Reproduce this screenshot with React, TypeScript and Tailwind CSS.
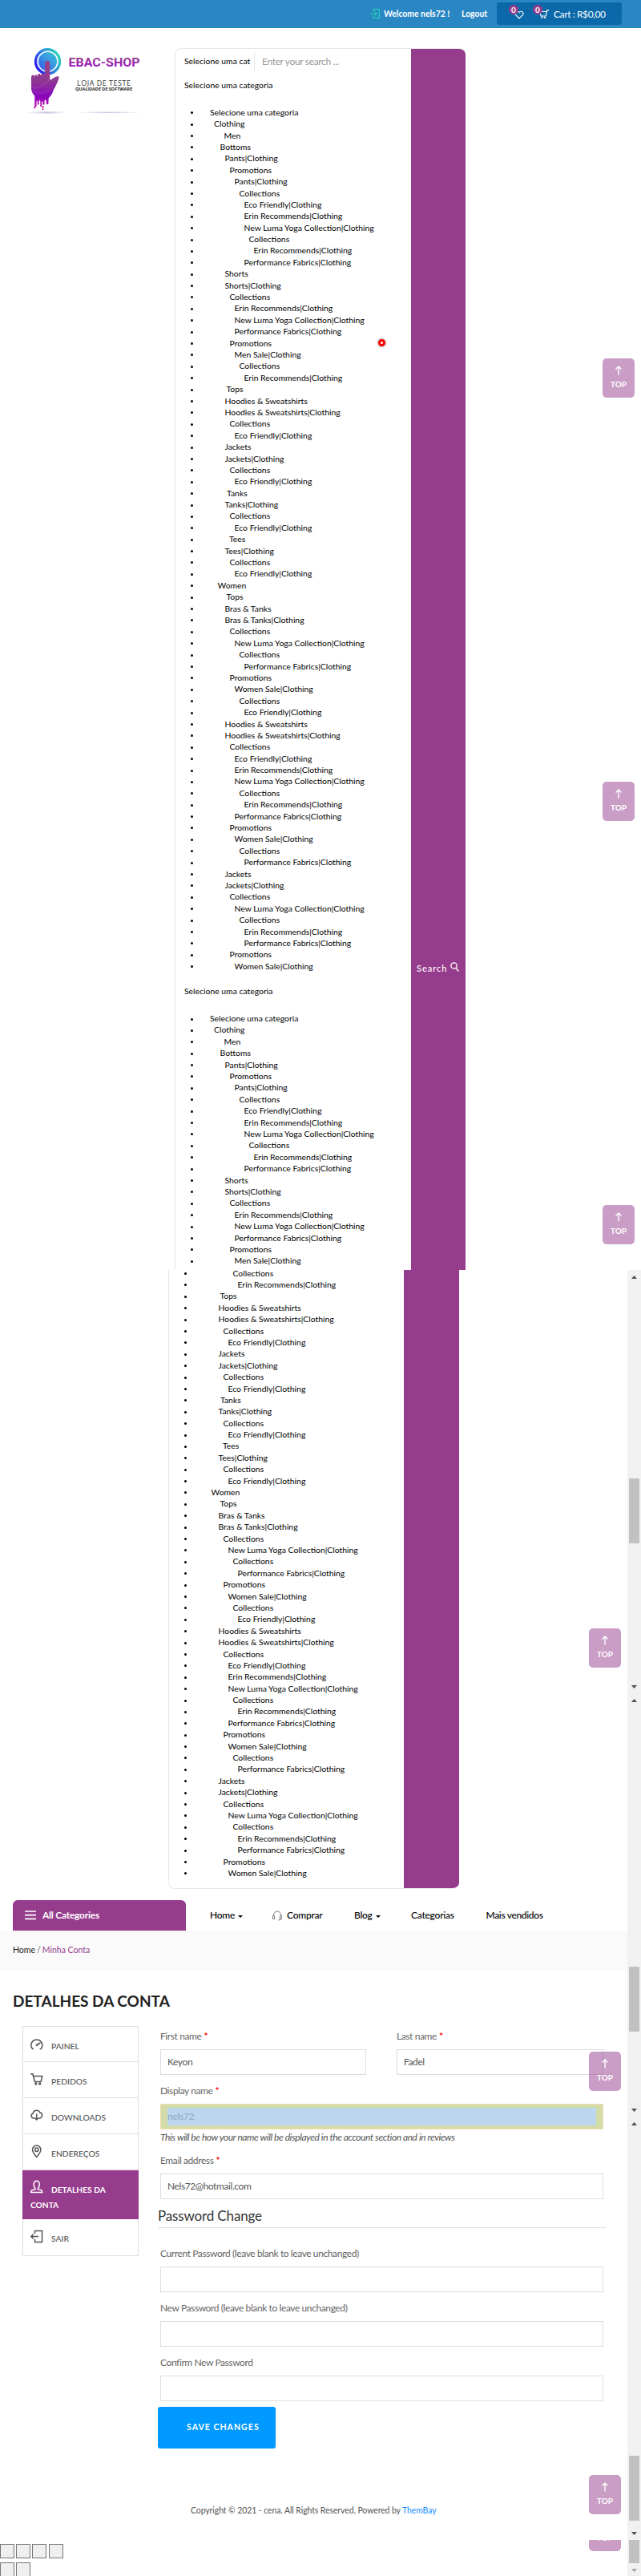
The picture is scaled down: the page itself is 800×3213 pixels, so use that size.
import React from "react";

type Row = [string, number];

const categories: Row[] = [
  ["Selecione uma categoria", 0],
  ["Clothing", 5],
  ["Men", 17.5],
  ["Bottoms", 12.5],
  ["Pants|Clothing", 18.5],
  ["Promotions", 24.5],
  ["Pants|Clothing", 30.5],
  ["Collections", 36.5],
  ["Eco Friendly|Clothing", 42.5],
  ["Erin Recommends|Clothing", 42.5],
  ["New Luma Yoga Collection|Clothing", 42.5],
  ["Collections", 48.5],
  ["Erin Recommends|Clothing", 54.5],
  ["Performance Fabrics|Clothing", 42.5],
  ["Shorts", 18.5],
  ["Shorts|Clothing", 18.5],
  ["Collections", 24.5],
  ["Erin Recommends|Clothing", 30.5],
  ["New Luma Yoga Collection|Clothing", 30.5],
  ["Performance Fabrics|Clothing", 30.5],
  ["Promotions", 24.5],
  ["Men Sale|Clothing", 30.5],
  ["Collections", 36.5],
  ["Erin Recommends|Clothing", 42.5],
  ["Tops", 20.5],
  ["Hoodies & Sweatshirts", 18.5],
  ["Hoodies & Sweatshirts|Clothing", 18.5],
  ["Collections", 24.5],
  ["Eco Friendly|Clothing", 30.5],
  ["Jackets", 18.5],
  ["Jackets|Clothing", 18.5],
  ["Collections", 24.5],
  ["Eco Friendly|Clothing", 30.5],
  ["Tanks", 21],
  ["Tanks|Clothing", 18.5],
  ["Collections", 24.5],
  ["Eco Friendly|Clothing", 30.5],
  ["Tees", 24],
  ["Tees|Clothing", 18.5],
  ["Collections", 24.5],
  ["Eco Friendly|Clothing", 30.5],
  ["Women", 9.5],
  ["Tops", 20.5],
  ["Bras & Tanks", 18.5],
  ["Bras & Tanks|Clothing", 18.5],
  ["Collections", 24.5],
  ["New Luma Yoga Collection|Clothing", 30.5],
  ["Collections", 36.5],
  ["Performance Fabrics|Clothing", 42.5],
  ["Promotions", 24.5],
  ["Women Sale|Clothing", 30.5],
  ["Collections", 36.5],
  ["Eco Friendly|Clothing", 42.5],
  ["Hoodies & Sweatshirts", 18.5],
  ["Hoodies & Sweatshirts|Clothing", 18.5],
  ["Collections", 24.5],
  ["Eco Friendly|Clothing", 30.5],
  ["Erin Recommends|Clothing", 30.5],
  ["New Luma Yoga Collection|Clothing", 30.5],
  ["Collections", 36.5],
  ["Erin Recommends|Clothing", 42.5],
  ["Performance Fabrics|Clothing", 30.5],
  ["Promotions", 24.5],
  ["Women Sale|Clothing", 30.5],
  ["Collections", 36.5],
  ["Performance Fabrics|Clothing", 42.5],
  ["Jackets", 18.5],
  ["Jackets|Clothing", 18.5],
  ["Collections", 24.5],
  ["New Luma Yoga Collection|Clothing", 30.5],
  ["Collections", 36.5],
  ["Erin Recommends|Clothing", 42.5],
  ["Performance Fabrics|Clothing", 42.5],
  ["Promotions", 24.5],
  ["Women Sale|Clothing", 30.5],
];

function CategoryList({ rows }: { rows: Row[] }) {
  return (
    <ul className="text-[10.4px] text-black">
      {rows.map(([name, indent], i) => (
        <li key={i} className="flex h-[14.4px] items-center whitespace-nowrap leading-[14.4px]">
          <span className="ml-[19px] mr-[21px] mt-[1.5px] size-[3px] shrink-0 rounded-full bg-black" />
          <span style={{ paddingLeft: indent }}>{name}</span>
        </li>
      ))}
    </ul>
  );
}

function Top({ className }: { className: string }) {
  return (
    <button className={`absolute flex h-[49px] w-10 flex-col items-center rounded-[5px] bg-[#963c8d]/50 pt-[9px] text-[10px] font-bold text-white ${className}`}>
      <svg width="10" height="12" viewBox="0 0 10 12" fill="none" stroke="white" strokeWidth="1.4">
        <path d="M5 11.5V1M1.5 4.5 5 1l3.5 3.5" />
      </svg>
      <span className="mt-[5px] leading-3">TOP</span>
    </button>
  );
}

function Arrow({ up = false, faded = false }: { up?: boolean; faded?: boolean }) {
  return (
    <div className="flex h-[17px] shrink-0 items-center justify-center">
      <svg width="7" height="4" viewBox="0 0 7 4" fill={faded ? "#a3a3a3" : "#505050"}>
        <path d={up ? "M0 4 3.5 0 7 4Z" : "M0 0 3.5 4 7 0Z"} />
      </svg>
    </div>
  );
}

function Scrollbar({ spacer }: { spacer: string }) {
  return (
    <div className="flex h-[528px] flex-col justify-between bg-[#f1f1f1]">
      <Arrow up />
      <div className="flex-1">
        <div className={spacer} />
        <div className="mx-auto h-[81px] w-[13px] bg-[#c1c1c1]" />
      </div>
      <Arrow />
    </div>
  );
}

function Logo() {
  return (
    <svg width="150" height="90" viewBox="30 56 150 90" className="ml-[30px] mt-[21px] block">
      <defs>
        <linearGradient id="ring" x1="0" y1="0.8" x2="1" y2="0.2">
          <stop offset="0" stopColor="#2a12f5" />
          <stop offset="0.5" stopColor="#2c82e0" />
          <stop offset="1" stopColor="#2ddcb8" />
        </linearGradient>
        <linearGradient id="disc" x1="0" y1="1" x2="1" y2="0">
          <stop offset="0" stopColor="#3653ee" />
          <stop offset="0.6" stopColor="#3a9fe0" />
          <stop offset="1" stopColor="#35bfd2" />
        </linearGradient>
        <linearGradient id="hand" gradientUnits="userSpaceOnUse" x1="0" y1="76" x2="0" y2="138">
          <stop offset="0" stopColor="#9a4485" />
          <stop offset="0.4" stopColor="#8f3894" />
          <stop offset="0.72" stopColor="#8a06bd" />
          <stop offset="1" stopColor="#d010a0" />
        </linearGradient>
        <linearGradient id="word" x1="0" y1="0" x2="0" y2="1">
          <stop offset="0.2" stopColor="#93408d" />
          <stop offset="0.8" stopColor="#9c0cc6" />
        </linearGradient>
        <radialGradient id="shade">
          <stop offset="0" stopColor="#8c80b8" stopOpacity="0.5" />
          <stop offset="1" stopColor="#8c80b8" stopOpacity="0" />
        </radialGradient>
      </defs>
      <circle cx="59.5" cy="76.7" r="15" fill="white" stroke="url(#ring)" strokeWidth="3.4" />
      <circle cx="59.5" cy="76.7" r="11.6" fill="url(#disc)" />
      <path
        fill="url(#hand)"
        d="M56 93V79q0-3.200 3.100-3.200T62.200 79V98q.5 3 3 .3L69 96q2.500-1.200 4.800-.3-.6 3.800-2.400 7.500l-4.900 9.800q-1 4.500-4 7.500-2 1-2 3.500v5q0 1.300-1.400 1.300T57.700 129v-3q0-1.800-1.200-1.600-1 .2-1 2v4h-2.200V127q-.6-1.600-1.300-.1V133h-1.700v-7q-.8-2-1.700 0v4.500h-1.700v-4l-1.300-1V133h-2.300v-13.500q-3.800-3.500-4.300-9V96q.1-2.600 1.900-2.600t1.900 2.400q.1-2.600 2-2.600t2.100 2.500v-1.200q.1-2.700 2-2.700t2.100 2.500q.2-2.800 2.200-2.800T56 93Z"
      />
      <path d="M41 110q16-1 22-13M41 114q14 6 23-4" stroke="#ffffff" strokeOpacity=".12" fill="none" />
      <circle cx="43.200" cy="134" r="1.200" fill="#c018a8" />
      <circle cx="53.500" cy="133.500" r="1.200" fill="#d010a0" />
      <circle cx="53.500" cy="136.300" r="1" fill="#d010a0" />
      <ellipse cx="58.500" cy="140.300" rx="26" ry="2" fill="url(#shade)" />
      <ellipse cx="136" cy="140.300" rx="42" ry="1.300" fill="url(#shade)" />
      <text x="85.500" y="82.700" textLength="89" lengthAdjust="spacingAndGlyphs" fontFamily="Roboto" fontWeight="700" fontSize="15.500" fill="url(#word)">EBAC-SHOP</text>
      <text x="96" y="106.700" textLength="67" lengthAdjust="spacing" fontFamily="Open Sans" fontSize="9" fill="#333">LOJA DE TESTE</text>
      <text x="94" y="113" textLength="71" lengthAdjust="spacingAndGlyphs" fontFamily="Open Sans" fontWeight="700" fontSize="5.600" fill="#222">QUALIDADE DE SOFTWARE</text>
    </svg>
  );
}

function Badge({ className }: { className: string }) {
  return (
    <span className={`absolute flex size-3 items-center justify-center rounded-full bg-[#963c8d] text-[10px] font-bold leading-3 text-white ${className}`}>0</span>
  );
}

function Label({ children, required = false, className = "" }: { children: React.ReactNode; required?: boolean; className?: string }) {
  return (
    <div className={`flex h-4 items-center whitespace-nowrap text-[12px] leading-4 tracking-[-0.4px] text-[#666] ${className}`}>
      {children}
      {required && <span className="ml-[3px] font-bold text-[#f00]">*</span>}
    </div>
  );
}

function Field({ value = "", className = "" }: { value?: string; className?: string }) {
  return <div className={`flex h-8 items-center border border-[#ddd] pl-2 text-[12px] tracking-[-0.4px] text-[#555] ${className}`}>{value}</div>;
}

const icon = { width: 17, height: 17, viewBox: "0 0 17 17", fill: "none", stroke: "currentColor", strokeWidth: 1.5, className: "shrink-0" };

const Gauge = () => (
  <svg {...icon}>
    <path d="M4 14.600H2.600A7 7 0 1 1 13 14.600H11.600" />
    <path d="M7 9.800a1 1 0 0 0 1.800.4l3.700-3.400-4.700 1.900a1 1 0 0 0-.8 1.100Z" strokeWidth="1.100" />
  </svg>
);
const CartIcon = () => (
  <svg {...icon}>
    <path d="M0 1.800h2.800L5.500 11.500h7.500L14.800 4.500H3.800" />
    <circle cx="6.800" cy="14" r=".9" />
    <circle cx="11.700" cy="14" r=".9" />
  </svg>
);
const Cloud = () => (
  <svg {...icon}>
    <path d="M5.500 12H4A3.100 3.100 0 0 1 3.200 6 4.500 4.500 0 0 1 11.700 4.800 3.700 3.700 0 0 1 11.800 12H9.800M7.700 6.500V14M5.500 11.800 7.700 14l2.200-2.200" />
  </svg>
);
const Pin = () => (
  <svg {...icon}>
    <path d="M7.700 15.500C4.200 11.500 2.500 9 2.500 6.300a5.200 5.200 0 0 1 10.400 0C12.900 9 11.200 11.500 7.700 15.500Z" />
    <circle cx="7.700" cy="6.300" r="2.200" />
  </svg>
);
const User = () => (
  <svg {...icon}>
    <path d="M6 10.500C3.400 8.500 3.200 1.300 7.700 1.300S12 8.500 9.400 10.500v1.200l4 1c1 .3 1.300 1 1.300 2.800H.7c0-1.800.3-2.500 1.300-2.800l4-1Z" />
  </svg>
);
const Exit = () => (
  <svg {...icon}>
    <path d="M5.500 5V1.500h9v14h-9V12M10 8.500H.8M3.800 5.500l-3 3 3 3" />
  </svg>
);

function SideItem({ children, art, className }: { children: React.ReactNode; art: React.ReactNode; className: string }) {
  return (
    <div className={`flex items-start border-b border-[#ddd] pl-[9px] pt-[13px] text-[10.3px] text-[#555] ${className}`}>
      {art}
      <span className="ml-[9px] mt-[3.5px] leading-[14px]">{children}</span>
    </div>
  );
}

function Caret() {
  return (
    <svg width="6" height="3" viewBox="0 0 6 3" className="ml-1 mt-[2px]"><path d="M0 0h6L3 3Z" /></svg>
  );
}

function SmallBox({ className = "" }: { className?: string }) {
  return <div className={`h-[18px] w-[18px] border border-[#767676] bg-[#efefef] ${className}`} />;
}

export default function App() {
  return (
    <div className="relative h-[3213px] w-[800px] overflow-hidden bg-white font-['Lato',sans-serif]">
      <section className="relative h-[1584px] overflow-hidden">
        <header className="flex h-[35px] items-start bg-[#2a87c4] pl-[462px] text-white">
          <svg width="12" height="12" viewBox="0 0 12 12" fill="none" stroke="#1fd1b5" strokeWidth="1.200" className="mt-[11px]">
            <path d="M4 4V.6h7.400v10.800H4V8M0 6h8M6 4l2 2-2 2" />
          </svg>
          <span className="ml-[5px] mt-[10px] w-[97px] whitespace-nowrap text-[10.400px] font-bold leading-[15px]">Welcome nels72 !</span>
          <span className="mt-[10px] w-[44px] text-[10.400px] font-bold leading-[15px]">Logout</span>
          <div className="relative mt-[3px] flex h-7 w-[156px] items-center rounded-[3px] bg-[#0b69a9]">
            <svg width="12" height="11" viewBox="0 0 12 11" fill="none" stroke="white" strokeWidth="1.100" className="ml-[22px] mt-[2px]">
              <path d="M6 10 1.500 5.500C-.5 3 3.500-.8 6 2.500 8.500-.8 12.500 3 10.500 5.500Z" />
            </svg>
            <svg width="12" height="11" viewBox="0 0 12 11" fill="none" stroke="white" strokeWidth="1.100" className="ml-[19px]">
              <path d="M12 .6H9.800L8.200 8H2L1 2.500h8.300" />
              <circle cx="3.500" cy="9.800" r=".6" />
              <circle cx="7" cy="9.800" r=".6" />
            </svg>
            <span className="ml-[6px] whitespace-nowrap pt-[2px] text-[12px] tracking-[-0.4px]">Cart : R$0,00</span>
            <Badge className="left-[15px] top-[3px]" />
            <Badge className="left-[45px] top-[3px]" />
          </div>
        </header>
        <div className="flex">
          <div className="w-[218px] shrink-0">
            <Logo />
          </div>
          <div className="mt-[25px] flex h-[1600px] w-[363px] overflow-hidden rounded-t-[8px] border-l border-t border-[#e8e8e8]">
            <div className="w-[294px] shrink-0 text-[10.4px]">
              <div className="flex h-[28px] items-center pt-1">
                <div className="ml-[11px] flex h-6 w-[88px] items-center whitespace-nowrap border-r border-[#e8e8e8]">Selecione uma cat</div>
                <span className="ml-[9px] text-[12px] tracking-[-0.34px] text-[#999]">Enter your search ...</span>
              </div>
              <div className="ml-[11px] mt-[10px] h-[33.800px] leading-[15px]">Selecione uma categoria</div>
              <CategoryList rows={categories} />
              <div className="ml-[11px] mt-[17.200px] h-[33.800px] leading-[15px]">Selecione uma categoria</div>
              <CategoryList rows={categories.slice(0, 22)} />
            </div>
            <button className="flex h-full flex-1 items-start bg-[#963c8d] pl-[7px] pt-[1139px] text-[11px] font-medium leading-[15px] tracking-[1px] text-white">
              Search
              <svg width="11" height="12" viewBox="0 0 11 12" fill="none" stroke="white" strokeWidth="1.300" className="ml-[3px]">
                <circle cx="4.500" cy="4.500" r="3.700" />
                <path d="m7 7.500 3.500 4" />
              </svg>
            </button>
          </div>
        </div>
        <div className="absolute left-[471.500px] top-[422.500px] size-[9px] rounded-full border-[3px] border-[#f00] bg-white shadow-[0_0_3px_rgba(0,0,0,0.6)]" />
        <Top className="left-[752px] top-[447px]" />
        <Top className="left-[752px] top-[975px]" />
        <Top className="left-[752px] top-[1503px]" />
      </section>

      <section className="relative flex h-[1629px]">
        <main className="w-[783px]">
          <div className="ml-[210px] flex h-[772px] w-[363px] overflow-hidden rounded-b-[8px] border-b border-l border-[#e8e8e8]">
            <div className="-mt-[3.400px] w-[293px]">
              <CategoryList rows={categories.slice(22)} />
            </div>
            <div className="flex-1 bg-[#963c8d]" />
          </div>
          <nav className="mt-[14px] flex h-[38px] items-center pl-4 text-[12px] font-medium tracking-[-0.24px] text-black">
            <div className="mr-[30px] flex h-full w-[216px] items-center rounded-t-[6px] bg-[#963c8d] pl-[15px] font-bold text-white">
              <svg width="14" height="12" viewBox="0 0 14 12" stroke="white" strokeWidth="1.700" className="mr-2"><path d="M0 1h14M0 5.700h14M0 10.400h14" /></svg>
              All Categories
            </div>
            <span className="flex w-[78px] items-center">Home <Caret /></span>
            <span className="flex w-[102px] items-center">
              <svg width="12" height="13" viewBox="0 0 12 13" fill="none" stroke="#777" className="mr-[6px]">
                <path d="M1.500 7V5.500a4.500 4.500 0 0 1 9 0V7M.6 6.500h2v4h-2ZM9.400 6.500h2v4h-2ZM10.500 10.500q0 1.500-3 1.500" />
              </svg>
              Comprar
            </span>
            <span className="flex w-[71px] items-center">Blog <Caret /></span>
            <span className="w-[93.500px]">Categorias</span>
            <span className="tracking-[-0.34px]">Mais vendidos</span>
          </nav>
          <div className="flex h-[50px] items-center bg-[#fafafa] pl-4 text-[10.5px] text-[#666]">
            <span className="text-[#222]">Home</span>
            <span className="mx-[2px]">/</span>
            <span className="text-[#963c8d]">Minha Conta</span>
          </div>
          <h1 className="ml-4 mt-[26px] h-[43px] text-[19px] font-bold leading-6 text-[#222]">DETALHES DA CONTA</h1>
          <div className="flex h-[527px]">
            <aside className="ml-7 h-fit w-[145px] border-x border-t border-[#ddd] font-medium">
              <SideItem className="h-[44px]" art={<Gauge />}>PAINEL</SideItem>
              <SideItem className="h-[45px]" art={<CartIcon />}>PEDIDOS</SideItem>
              <SideItem className="h-[45px]" art={<Cloud />}>DOWNLOADS</SideItem>
              <SideItem className="h-[45px]" art={<Pin />}>ENDEREÇOS</SideItem>
              <div className="-mx-px h-[61px] bg-[#963c8d] pl-[10px] pt-[12px] text-[10.2px] font-bold text-white">
                <div className="flex items-start">
                  <User />
                  <span className="ml-[9px] mt-[5px] leading-[14px]">DETALHES DA</span>
                </div>
                <div className="mt-[5px] leading-[14px]">CONTA</div>
              </div>
              <SideItem className="h-[46px]" art={<Exit />}>SAIR</SideItem>
            </aside>
            <div className="ml-6 w-[559px] pt-[5px]">
              <div className="px-[3px]">
                <div className="flex justify-between">
                  <div className="w-[257px]">
                    <Label required>First name</Label>
                    <Field className="mt-2" value="Keyon" />
                  </div>
                  <div className="w-[258px]">
                    <Label required>Last name</Label>
                    <Field className="mt-2" value="Fadel" />
                  </div>
                </div>
                <Label required className="mt-3">Display name</Label>
                <div className="mt-2 h-8 border border-[#f0dcae] bg-[#d3dca9] px-2 py-1">
                  <div className="flex h-[22px] items-center bg-[#bcd6ed] text-[12px] tracking-[-0.3px] text-[#8ea9c4]">nels72</div>
                </div>
                <div className="mt-[2px] h-4 whitespace-nowrap text-[12px] italic leading-4 tracking-[-0.435px] text-[#555]">This will be how your name will be displayed in the account section and in reviews</div>
                <Label required className="mt-[13px]">Email address</Label>
                <Field className="mt-2" value="Nels72@hotmail.com" />
              </div>
              <div className="mt-[9px] h-[27px] border-b border-[#e0e0e0] text-[17px] leading-[24px] tracking-[-0.15px] text-[#333]">Password Change</div>
              <div className="px-[3px]">
                <Label className="mt-6">Current Password (leave blank to leave unchanged)</Label>
                <Field className="mt-2" />
                <Label className="mt-3">New Password (leave blank to leave unchanged)</Label>
                <Field className="mt-2" />
                <Label className="mt-3">Confirm New Password</Label>
                <Field className="mt-2" />
              </div>
              <button className="mt-[7px] flex h-[52px] w-[147px] items-center rounded-[3px] bg-[#09f] pl-9 text-[10.6px] font-bold tracking-[1px] text-white">SAVE CHANGES</button>
            </div>
          </div>
          <footer className="mt-[69px] h-[45px] pl-[238px] text-[10.5px] leading-4 tracking-[-0.1px] text-[#555]">
            Copyright © 2021 - cena. All Rights Reserved. Powered by <span className="text-[#1890ff]">ThemBay</span>
          </footer>
          <div className="mt-[5px] flex gap-[2px]">
            <SmallBox />
            <SmallBox />
            <SmallBox />
            <SmallBox className="ml-[1px]" />
          </div>
          <div className="mt-[5px] flex gap-[2px]">
            <SmallBox />
            <SmallBox />
          </div>
        </main>
        <div className="w-[17px]">
          <Scrollbar spacer="h-[243px]" />
          <Scrollbar spacer="h-[324px]" />
          <Scrollbar spacer="h-[406px]" />
          <div className="h-[45px] bg-[#f1f1f1]">
            <div className="mx-auto h-[29px] w-[13px] bg-[#c1c1c1]" />
            <Arrow faded />
          </div>
        </div>
        <Top className="left-[735px] top-[447px]" />
        <Top className="left-[735px] top-[975px]" />
        <Top className="left-[735px] top-[1503px]" />
        <div className="absolute left-[735px] top-[1584px] h-[14px] w-10 overflow-hidden">
          <Top className="-top-[35px] left-0" />
        </div>
      </section>
    </div>
  );
}
